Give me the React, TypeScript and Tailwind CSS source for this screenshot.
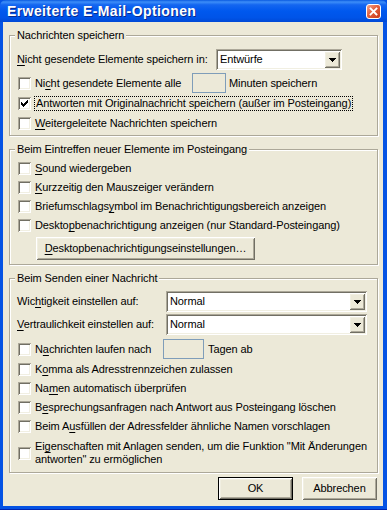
import type { ReactNode } from 'react';

// Classic 3D edges on the XP face colour
const SUNKEN =
  'shadow-[inset_1px_1px_0_#ACA899,inset_-1px_-1px_0_#FFFFFF,inset_2px_2px_0_#716F64,inset_-2px_-2px_0_#F1EFE2]';
const RAISED =
  'shadow-[inset_1px_1px_0_#FFFFFF,inset_-1px_-1px_0_#716F64,inset_2px_2px_0_#F1EFE2,inset_-2px_-2px_0_#ACA899]';

// accelerator letter
function U({ children }: { children: ReactNode }) {
  return <span className="underline underline-offset-[2px] decoration-[1px]">{children}</span>;
}

function CheckBox({ checked }: { checked?: boolean }) {
  return (
    <span className={`relative block w-[13px] h-[13px] shrink-0 bg-white ${SUNKEN}`}>
      {checked && (
        <svg className="absolute inset-0" width="13" height="13" viewBox="0 0 13 13" shapeRendering="crispEdges">
          <rect x="3" y="5" width="1" height="3" fill="#000" />
          <rect x="4" y="6" width="1" height="3" fill="#000" />
          <rect x="5" y="7" width="1" height="3" fill="#000" />
          <rect x="6" y="6" width="1" height="3" fill="#000" />
          <rect x="7" y="5" width="1" height="3" fill="#000" />
          <rect x="8" y="4" width="1" height="3" fill="#000" />
          <rect x="9" y="3" width="1" height="3" fill="#000" />
        </svg>
      )}
    </span>
  );
}

function CheckRow({ checked, focus, children }: { checked?: boolean; focus?: boolean; children: ReactNode }) {
  return (
    <div className="flex items-center h-[19px] pl-[8px]">
      <CheckBox checked={checked} />
      {focus ? (
        <span className="ml-[3px] px-[1px] border border-dotted border-black leading-[13px]">{children}</span>
      ) : (
        <span className="ml-[4px]">{children}</span>
      )}
    </div>
  );
}

function Combo({ value, width }: { value: string; width: string }) {
  return (
    <div className={`flex h-[21px] p-[2px] bg-white ${SUNKEN} ${width}`}>
      <span className="flex-1 pl-[2px] leading-[17px]">{value}</span>
      <span className={`flex items-center justify-center w-[16px] h-[17px] bg-[#ECE9D8] ${RAISED}`}>
        <svg width="7" height="4" viewBox="0 0 7 4" shapeRendering="crispEdges">
          <rect x="0" y="0" width="7" height="1" fill="#000" />
          <rect x="1" y="1" width="5" height="1" fill="#000" />
          <rect x="2" y="2" width="3" height="1" fill="#000" />
          <rect x="3" y="3" width="1" height="1" fill="#000" />
        </svg>
      </span>
    </div>
  );
}

function Spin({ width }: { width: string }) {
  return <span className={`block h-[20px] border border-[#7F9DB9] bg-[#ECE9D8] ${width}`} />;
}

function Group({ title, className, children }: { title: string; className?: string; children: ReactNode }) {
  return (
    <fieldset
      className={`w-[369px] border border-[#ACA899] shadow-[inset_1px_1px_0_#FFFFFF,1px_1px_0_#FFFFFF] ${className ?? ''}`}
    >
      <legend className="ml-[5px] px-[2px] bg-[#ECE9D8] leading-[13px]">{title}</legend>
      {children}
    </fieldset>
  );
}

function PushButton({ children, isDefault, className }: { children: ReactNode; isDefault?: boolean; className?: string }) {
  if (isDefault) {
    return (
      <div className={`h-[23px] border border-black ${className ?? ''}`}>
        <div className={`h-full flex items-center justify-center bg-[#ECE9D8] ${RAISED}`}>{children}</div>
      </div>
    );
  }
  return (
    <div className={`h-[23px] flex items-center justify-center bg-[#ECE9D8] ${RAISED} ${className ?? ''}`}>
      {children}
    </div>
  );
}

export default function App() {
  return (
    <div className="w-[387px] h-[510px] flex flex-col bg-[#0553E4] border-b border-[#0025B0] font-['Liberation_Sans',Arial,sans-serif] text-[11px] leading-[13px] tracking-[-0.1px] text-black select-none">
      {/* Title bar */}
      <div className="h-[22px] shrink-0 flex items-center pl-[7px] pr-[6px] rounded-t-[6px] bg-[linear-gradient(to_bottom,#0A5AE0_0%,#3D8EF8_9%,#1466F0_22%,#0058EE_50%,#0054E8_80%,#0049D6_100%)]">
        <span className="text-white font-bold text-[14px] tracking-[0.4px] [text-shadow:1px_1px_0_#0A2A8C]">
          Erweiterte E-Mail-Optionen
        </span>
        <div className="ml-auto w-[15px] h-[15px] rounded-[3px] border border-white bg-[linear-gradient(135deg,#F3A58C_0%,#E2603D_45%,#C7391B_100%)] flex items-center justify-center">
          <svg width="9" height="9" viewBox="0 0 9 9">
            <path d="M1.5 1.5l6 6M7.5 1.5l-6 6" stroke="#fff" strokeWidth="1.8" strokeLinecap="square" />
          </svg>
        </div>
      </div>

      {/* Client area */}
      <div className="flex-1 ml-[3px] mr-[4px] mb-[3px] bg-[#ECE9D8] pl-[6px] pt-[7px] flex flex-col">
        <Group title="Nachrichten speichern" className="pb-[2px]">
          <div className="mt-[7px] flex items-center h-[21px] pl-[7px]">
            <span className="w-[199px]">
              <U>N</U>icht gesendete Elemente speichern in:
            </span>
            <Combo value="Entwürfe" width="w-[126px]" />
          </div>
          <div className="mt-[3px] flex items-center h-[20px] pl-[8px]">
            <CheckBox />
            <span className="ml-[4px] w-[157px]">
              Ni<U>c</U>ht gesendete Elemente alle
            </span>
            <Spin width="w-[34px]" />
            <span className="ml-[3px]">Minuten speichern</span>
          </div>
          <div className="[&>div]:h-[20px]">
            <CheckRow checked focus>
              Antworten mit Originalnachricht speichern (außer im Posteingang)
            </CheckRow>
            <CheckRow>
              <U>W</U>eitergeleitete Nachrichten speichern
            </CheckRow>
          </div>
        </Group>

        <Group title="Beim Eintreffen neuer Elemente im Posteingang" className="mt-[7px] pb-[4px]">
          <div className="mt-[3px]">
            <CheckRow>
              <U>S</U>ound wiedergeben
            </CheckRow>
            <CheckRow>
              <U>K</U>urzzeitig den Mauszeiger verändern
            </CheckRow>
            <CheckRow>
              Briefumschlags<U>y</U>mbol im Benachrichtigungsbereich anzeigen
            </CheckRow>
            <CheckRow>
              Deskto<U>p</U>benachrichtigung anzeigen (nur Standard-Posteingang)
            </CheckRow>
          </div>
          <div className="mt-[2px] pl-[26px]">
            <PushButton className="w-[219px]">
              <span>
                <U>D</U>esktopbenachrichtigungseinstellungen…
              </span>
            </PushButton>
          </div>
        </Group>

        <Group title="Beim Senden einer Nachricht" className="mt-[7px] pb-[6px]">
          <div className="mt-[6px] flex items-center h-[21px] pl-[7px]">
            <span className="w-[149px]">
              Wic<U>h</U>tigkeit einstellen auf:
            </span>
            <Combo value="Normal" width="w-[201px]" />
          </div>
          <div className="mt-[2px] flex items-center h-[21px] pl-[7px]">
            <span className="w-[149px]">
              <U>V</U>ertraulichkeit einstellen auf:
            </span>
            <Combo value="Normal" width="w-[201px]" />
          </div>
          <div className="mt-[4px] flex items-center h-[20px] pl-[8px]">
            <CheckBox />
            <span className="ml-[4px] w-[128px]">
              N<U>a</U>chrichten laufen nach
            </span>
            <Spin width="w-[41px]" />
            <span className="ml-[4px]">Tagen ab</span>
          </div>
          <div className="mt-[1px]">
            <CheckRow>
              K<U>o</U>mma als Adresstrennzeichen zulassen
            </CheckRow>
            <CheckRow>
              Na<U>m</U>en automatisch überprüfen
            </CheckRow>
            <CheckRow>
              B<U>e</U>sprechungsanfragen nach Antwort aus Posteingang löschen
            </CheckRow>
            <CheckRow>
              Beim A<U>u</U>sfüllen der Adressfelder ähnliche Namen vorschlagen
            </CheckRow>
          </div>
          <div className="mt-[4px] flex items-center pl-[8px]">
            <CheckBox />
            <span className="ml-[4px] leading-[13px]">
              Ei<U>g</U>enschaften mit Anlagen senden, um die Funktion "Mit Änderungen
              <br />
              antworten" zu ermöglichen
            </span>
          </div>
        </Group>

        <div className="mt-[4px] w-[369px] pr-[1px] flex justify-end gap-[9px]">
          <PushButton isDefault className="w-[75px]">
            OK
          </PushButton>
          <PushButton className="w-[75px]">Abbrechen</PushButton>
        </div>
      </div>
    </div>
  );
}
